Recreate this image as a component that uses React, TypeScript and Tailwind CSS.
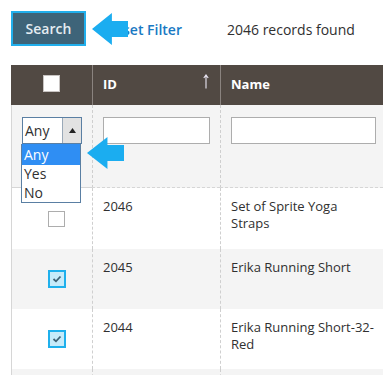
import React from "react";

function CheckedBox() {
  return (
    <div className="w-[18px] h-[18px] border-2 border-[#1fb0ec] bg-[#c6ebfa] flex items-center justify-center">
      <svg width="10" height="8" viewBox="0 0 10 8">
        <path d="M1.5 4 L4 6.3 L8.5 1.5" fill="none" stroke="#3f6275" strokeWidth="1.8" />
      </svg>
    </div>
  );
}

function Arrow({ className }: { className: string }) {
  return (
    <svg className={className} viewBox="0 0 38 32" preserveAspectRatio="none">
      <polygon points="0,16 21,0 21,8 38,8 38,24 21,24 21,32" fill="#1badf0" />
    </svg>
  );
}

export default function App() {
  return (
    <div className="relative w-[383px] h-[375px] overflow-hidden bg-white text-[#303030]" style={{ fontFamily: '"Open Sans", sans-serif' }}>
      {/* top bar */}
      <div className="h-[65px] flex items-start pt-[11px] pl-[11px]">
        <button className="w-[75px] h-[35px] border-2 border-[#21afec] bg-[#3e6479] text-[#e4ecf1] text-[14px] font-semibold flex items-center justify-center">
          Search
        </button>
        <span className="ml-[20px] mt-[8px] text-[14px] font-semibold text-[#1979c3]">Reset Filter</span>
        <span className="ml-[45px] mt-[8px] text-[14px] text-[#303030]">2046 records found</span>
      </div>

      {/* table */}
      <div className="ml-[11px] grid grid-cols-[81px_128px_1fr] text-[13px]">
        {/* header */}
        <div className="h-[40px] bg-[#514943] flex items-center justify-center">
          <div className="w-[17px] h-[17px] bg-white border border-[#c8c4c2] -mt-[3px]" />
        </div>
        <div className="relative h-[40px] bg-[#514943] border-l border-[#8a837f] pl-[10px] flex items-center text-white font-bold">
          ID
          <svg className="absolute right-[11px] top-[9px]" width="6" height="15" viewBox="0 0 6 15">
            <path d="M3 14.5 V1.5 M0.8 4 L3 1 L5.2 4" fill="none" stroke="#ebe7f5" strokeWidth="1.1" />
          </svg>
        </div>
        <div className="h-[40px] bg-[#514943] border-l border-[#8a837f] pl-[10px] flex items-center text-white font-bold">
          Name
        </div>

        {/* filter row */}
        <div className="h-[83px] bg-[#f4f4f4] border-l border-[#d6d6d6] border-b pt-[12px] pl-[10px]">
          <div className="w-[60px] h-[27px] border border-[#5a7fa3] bg-white flex text-[14px]">
            <span className="flex-1 pl-[2px] leading-[25px]">Any</span>
            <span className="w-[19px] bg-[#e2e2e2] border-l border-[#9aa9b8] flex items-center justify-center">
              <svg width="7" height="5" viewBox="0 0 7 5"><polygon points="3.5,0 7,5 0,5" fill="#222" /></svg>
            </span>
          </div>
        </div>
        <div className="h-[83px] bg-[#f4f4f4] border-l border-dashed border-l-[#cfcfcf] border-b border-b-[#d6d6d6] pt-[12px] pl-[10px] pr-[10px]">
          <div className="h-[27px] w-[107px] bg-white border border-[#adadad]" />
        </div>
        <div className="h-[83px] bg-[#f4f4f4] border-l border-dashed border-l-[#cfcfcf] border-b border-b-[#d6d6d6] pt-[12px] pl-[10px] pr-[7px]">
          <div className="h-[27px] bg-white border border-[#adadad]" />
        </div>

        {/* row 1 */}
        <div className="h-[61px] bg-white border-l border-[#d6d6d6] flex items-center pl-[36px]">
          <div className="w-[17px] h-[16px] border border-[#adadad] bg-white mt-[1px]" />
        </div>
        <div className="h-[61px] bg-white border-l border-dashed border-[#cfcfcf] pl-[10px] pt-[10px] leading-[17px]">2046</div>
        <div className="h-[61px] bg-white border-l border-dashed border-[#cfcfcf] pl-[10px] pt-[10px] leading-[17px]">
          <span className="block">Set of Sprite Yoga</span>
          <span className="block">Straps</span>
        </div>

        {/* row 2 */}
        <div className="h-[60px] bg-[#f4f4f4] border-l border-[#d6d6d6] flex items-center pl-[36px]">
          <CheckedBox />
        </div>
        <div className="h-[60px] bg-[#f4f4f4] border-l border-dashed border-[#cfcfcf] pl-[10px] pt-[10px] leading-[17px]">2045</div>
        <div className="h-[60px] bg-[#f4f4f4] border-l border-dashed border-[#cfcfcf] pl-[10px] pt-[10px] leading-[17px]">Erika Running Short</div>

        {/* row 3 */}
        <div className="h-[60px] bg-white border-l border-[#d6d6d6] flex items-center pl-[36px]">
          <CheckedBox />
        </div>
        <div className="h-[60px] bg-white border-l border-dashed border-[#cfcfcf] pl-[10px] pt-[10px] leading-[17px]">2044</div>
        <div className="h-[60px] bg-white border-l border-dashed border-[#cfcfcf] pl-[10px] pt-[10px] leading-[17px]">
          <span className="block">Erika Running Short-32-</span>
          <span className="block">Red</span>
        </div>

        {/* row 4 */}
        <div className="h-[40px] bg-[#f4f4f4] border-l border-[#d6d6d6]" />
        <div className="h-[40px] bg-[#f4f4f4] border-l border-dashed border-[#cfcfcf]" />
        <div className="h-[40px] bg-[#f4f4f4] border-l border-dashed border-[#cfcfcf]" />
      </div>

      {/* open dropdown list */}
      <div className="absolute left-[21px] top-[144px] w-[60px] border border-[#5a7fa3] border-t-0 bg-white text-[14px]">
        <div className="h-[21px] bg-[#2f8ef3] text-white pl-[2px] leading-[21px]">Any</div>
        <div className="h-[18px] pl-[2px] leading-[18px]">Yes</div>
        <div className="h-[19px] pl-[2px] leading-[19px]">No</div>
      </div>

      {/* annotation arrows */}
      <Arrow className="absolute left-[92px] top-[13px] w-[36px] h-[32px]" />
      <Arrow className="absolute left-[87px] top-[137px] w-[37px] h-[32px]" />
    </div>
  );
}
